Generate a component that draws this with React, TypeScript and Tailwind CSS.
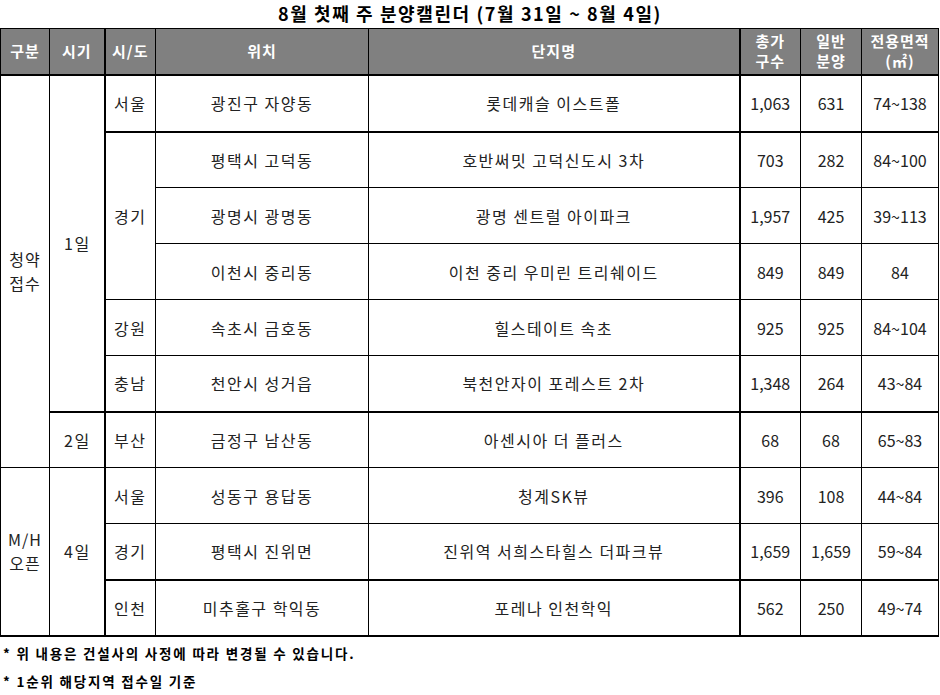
const font = { fontFamily: '"Noto Sans CJK KR", "Noto Sans", sans-serif' }

type Row = {
  gubun?: { text: string[]; span: number }
  sigi?: { text: string; span: number }
  sido?: { text: string; span: number }
  loc: string
  name: string
  total: string
  general: string
  area: string
  thickTop?: boolean
  thickFromSigi?: boolean
}

const rows: Row[] = [
  { gubun: { text: ['청약', '접수'], span: 7 }, sigi: { text: '1일', span: 6 }, sido: { text: '서울', span: 1 }, loc: '광진구 자양동', name: '롯데캐슬 이스트폴', total: '1,063', general: '631', area: '74~138' },
  { sido: { text: '경기', span: 3 }, loc: '평택시 고덕동', name: '호반써밋 고덕신도시 3차', total: '703', general: '282', area: '84~100', thickTop: true },
  { loc: '광명시 광명동', name: '광명 센트럴 아이파크', total: '1,957', general: '425', area: '39~113' },
  { loc: '이천시 중리동', name: '이천 중리 우미린 트리쉐이드', total: '849', general: '849', area: '84' },
  { sido: { text: '강원', span: 1 }, loc: '속초시 금호동', name: '힐스테이트 속초', total: '925', general: '925', area: '84~104' },
  { sido: { text: '충남', span: 1 }, loc: '천안시 성거읍', name: '북천안자이 포레스트 2차', total: '1,348', general: '264', area: '43~84' },
  { sigi: { text: '2일', span: 1 }, sido: { text: '부산', span: 1 }, loc: '금정구 남산동', name: '아센시아 더 플러스', total: '68', general: '68', area: '65~83', thickFromSigi: true },
  { gubun: { text: ['M/H', '오픈'], span: 3 }, sigi: { text: '4일', span: 3 }, sido: { text: '서울', span: 1 }, loc: '성동구 용답동', name: '청계SK뷰', total: '396', general: '108', area: '44~84' },
  { sido: { text: '경기', span: 1 }, loc: '평택시 진위면', name: '진위역 서희스타힐스 더파크뷰', total: '1,659', general: '1,659', area: '59~84' },
  { sido: { text: '인천', span: 1 }, loc: '미추홀구 학익동', name: '포레나 인천학익', total: '562', general: '250', area: '49~74', thickTop: true },
]

const th = 'border border-black bg-[#808080] text-white font-semibold text-[15px] leading-[20px] tracking-[1px] text-center align-middle'

export default function App() {
  return (
    <div className="w-[940px] h-[695px] bg-white text-[#222]" style={font}>
      <h1 className="h-[28px] text-center text-[18px] font-bold leading-[26px] tracking-[1.6px] text-black">
        8월 첫째 주 분양캘린더 (7월 31일 ~ 8월 4일)
      </h1>
      <table className="w-[938px] table-fixed border-collapse border-b-2 border-black">
        <colgroup>
          <col className="w-[49px]" />
          <col className="w-[55px]" />
          <col className="w-[51px]" />
          <col className="w-[213px]" />
          <col className="w-[371px]" />
          <col className="w-[61px]" />
          <col className="w-[61px]" />
          <col className="w-[77px]" />
        </colgroup>
        <thead>
          <tr className="h-[46px]">
            <th className={th}>구분</th>
            <th className={`${th} border-r-2`}>시기</th>
            <th className={th}>시/도</th>
            <th className={th}>위치</th>
            <th className={`${th} border-r-2`}>단지명</th>
            <th className={th}>총가<br />구수</th>
            <th className={th}>일반<br />분양</th>
            <th className={`${th} text-[14px] tracking-[0.5px]`}>전용면적<br />(㎡)</th>
          </tr>
        </thead>
        <tbody className="text-[16px] text-center">
          {rows.map((r, i) => {
            const top = r.thickTop || r.thickFromSigi ? 'border-t-2' : ''
            const cell = `border border-black align-middle ${top}`
            const ko = `${cell} tracking-[1.5px]`
            return (
              <tr key={i} className={i === 0 ? 'h-[57px] border-t-2 border-black' : 'h-[56px]'}>
                {r.gubun && (
                  <td rowSpan={r.gubun.span} className="border border-black align-middle leading-[24px] tracking-[1px]">
                    {r.gubun.text.map((t) => (
                      <div key={t}>{t}</div>
                    ))}
                  </td>
                )}
                {r.sigi && (
                  <td rowSpan={r.sigi.span} className={`${ko} border-r-2 text-left pl-[14px]`}>
                    {r.sigi.text}
                  </td>
                )}
                {r.sido && (
                  <td rowSpan={r.sido.span} className={ko}>
                    {r.sido.text}
                  </td>
                )}
                <td className={ko}>{r.loc}</td>
                <td className={`${ko} border-r-2`}>{r.name}</td>
                <td className={cell}>{r.total}</td>
                <td className={cell}>{r.general}</td>
                <td className={cell}>{r.area}</td>
              </tr>
            )
          })}
        </tbody>
      </table>
      <p className="mt-[7px] pl-[3px] text-[13.5px] font-bold tracking-[1.8px] text-black leading-[18px]">
        * 위 내용은 건설사의 사정에 따라 변경될 수 있습니다.
      </p>
      <p className="mt-[10px] pl-[3px] text-[13.5px] font-bold tracking-[1.8px] text-black leading-[18px]">
        * 1순위 해당지역 접수일 기준
      </p>
    </div>
  )
}
